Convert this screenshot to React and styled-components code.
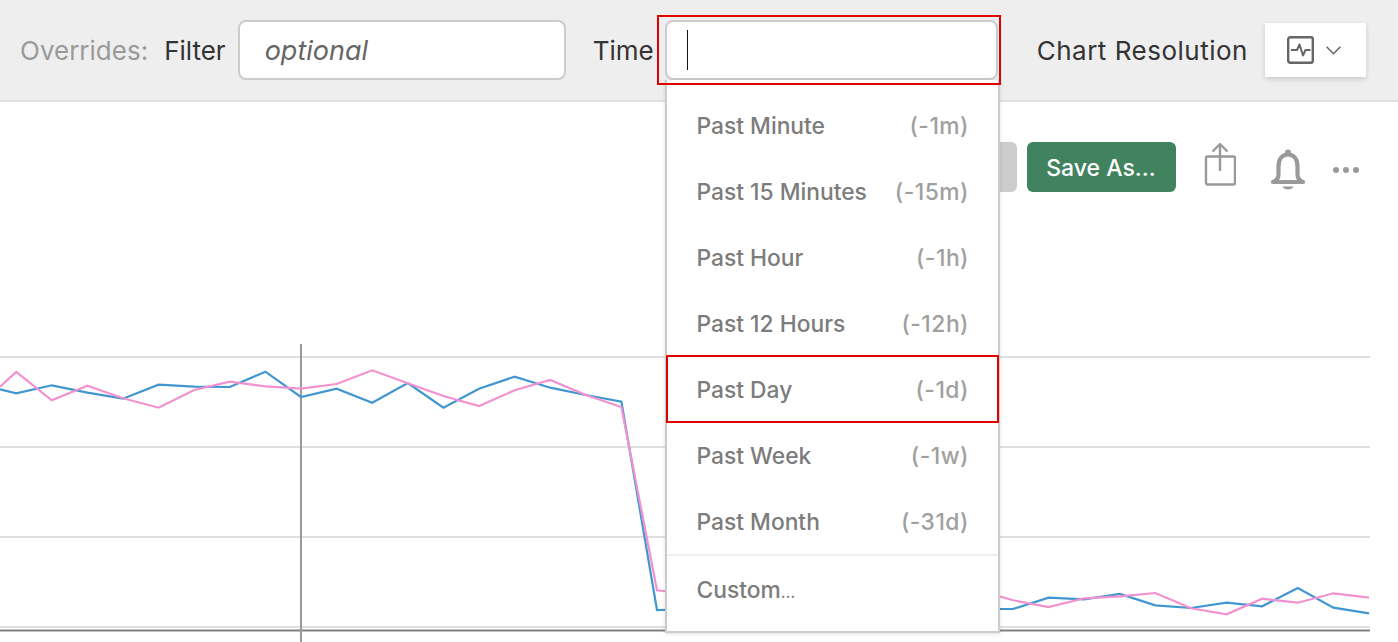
import React from "react";
import styled, { createGlobalStyle } from "styled-components";

const GlobalStyle = createGlobalStyle`
  html, body {
    margin: 0;
    padding: 0;
    background: #fff;
    overflow: hidden;
  }
  body {
    font-family: Inter, "Liberation Sans", sans-serif;
  }
`;

const Page = styled.div`
  position: relative;
  width: 1398px;
  height: 642px;
  overflow: hidden;
`;

const Toolbar = styled.div`
  height: 100px;
  border-bottom: 2px solid #e0e0e0;
  background: #eeeeee;
  display: flex;
  align-items: center;
  padding-left: 20px;
  box-sizing: content-box;
`;

const Label = styled.span`
  font-size: 26px;
  color: ${(p) => (p.$muted ? "#9a9a9a" : "#333333")};
  margin-left: ${(p) => p.$left || 0}px;
  margin-right: ${(p) => p.$right || 0}px;
  letter-spacing: ${(p) => p.$spacing || 0}px;
  white-space: nowrap;
`;

const Field = styled.div`
  box-sizing: border-box;
  width: ${(p) => p.$width}px;
  height: 60px;
  background: #fff;
  border: 2px solid #cccccc;
  border-radius: 8px;
  display: flex;
  align-items: center;
  padding-left: 25px;
  font-size: 27px;
  font-style: italic;
  color: #666666;
`;

const Caret = styled.span`
  width: 1px;
  height: 40px;
  margin-left: -5px;
  background: #111;
`;

const ResolutionButton = styled.div`
  box-sizing: border-box;
  width: 101px;
  height: 54px;
  margin-left: 17px;
  background: #fff;
  box-shadow: 0 2px 5px rgba(0, 0, 0, 0.16);
  display: flex;
  align-items: center;
  padding-left: 22px;
  gap: 12px;
`;

const Content = styled.div`
  position: relative;
  height: 540px;
`;

const Actions = styled.div`
  position: absolute;
  top: 40px;
  right: 0;
  left: 0;
  display: flex;
  align-items: flex-start;
  height: 52px;
`;

const ActionButton = styled.div`
  height: 50px;
  border-radius: 6px;
  background: ${(p) => p.$bg};
  color: #fff;
  font-size: 23px;
  font-weight: 500;
  padding: 2px 1px 0 0;
  display: flex;
  align-items: center;
  justify-content: center;
  box-sizing: border-box;
  width: ${(p) => p.$width}px;
  margin-left: ${(p) => p.$left}px;
`;

const ActionIcon = styled.svg`
  display: block;
  flex: none;
  margin-left: ${(p) => p.$left}px;
  margin-top: ${(p) => p.$top || 0}px;
`;

const Chart = styled.svg`
  position: absolute;
  left: 0;
  top: 0;
  display: block;
`;

const Dropdown = styled.div`
  position: absolute;
  left: 665px;
  top: 80px;
  width: 335px;
  height: 553px;
  box-sizing: border-box;
  background: #fff;
  border: 2px solid #cccccc;
  border-top: none;
  box-shadow: 0 1px 4px rgba(0, 0, 0, 0.12);
  padding-top: 13px;
`;

const Option = styled.div`
  box-sizing: border-box;
  height: 66px;
  display: flex;
  align-items: center;
  justify-content: space-between;
  padding: 0 29px 2px 29.5px;
  font-size: 22.8px;
  font-weight: 500;
  color: #7c7c7c;
  white-space: nowrap;
`;

const Shortcut = styled.span`
  color: #a0a0a0;
  letter-spacing: 0.5px;
`;

const Dots = styled.span`
  font-size: 16px;
`;

const Divider = styled.div`
  height: 2px;
  margin: -1px 0 1px;
  background: #eeeeee;
`;

const Highlight = styled.div`
  position: absolute;
  box-sizing: border-box;
  border: 2px solid #e00000;
  left: ${(p) => p.$x}px;
  top: ${(p) => p.$y}px;
  width: ${(p) => p.$w}px;
  height: ${(p) => p.$h}px;
  pointer-events: none;
`;

const options = [
  ["Past Minute", "(-1m)"],
  ["Past 15 Minutes", "(-15m)"],
  ["Past Hour", "(-1h)"],
  ["Past 12 Hours", "(-12h)"],
  ["Past Day", "(-1d)"],
  ["Past Week", "(-1w)"],
  ["Past Month", "(-31d)"],
];

const blue = [393.3, 385.3, 392.7, 398.7, 384.7, 386.7, 387, 371.7, 397, 388.7, 402.7, 383, 407.7, 388.7, 376.7, 387.7, 395, 401.7, 610, 609, 609, 609, 609, 609, 609, 609, 609, 609, 609, 597.7, 599.3, 594, 605.3, 608, 602.7, 606.3, 588, 607.7, 613.3];
const pink = [372, 400.3, 385.7, 398.3, 407.7, 390, 381.7, 386.3, 388.7, 384, 370.3, 383.3, 396, 406, 390.3, 380, 395, 407, 590.3, 594, 594, 594, 594, 594, 594, 594, 594, 590, 600.3, 607, 598.3, 596.3, 593, 608.3, 614.3, 598.7, 602.7, 593.3, 597.7];

const toPoints = (start, ys) =>
  [start, ...ys.map((y, i) => `${(16.2 + 35.6 * i).toFixed(1)},${y - 102}`)].join(" ");

const App = () => {
  return (
    <Page>
      <GlobalStyle />
      <Toolbar>
        <Label $muted>Overrides:</Label>
        <Label $left={16} $right={12}>Filter</Label>
        <Field $width={328}>optional</Field>
        <Label $left={27} $right={11}>Time</Label>
        <Field $width={333}><Caret /></Field>
        <Label $left={39} $spacing={0.5}>Chart Resolution</Label>
        <ResolutionButton>
          <svg width="27" height="28" viewBox="0 0 27 28" fill="none" stroke="#666" strokeWidth="2.4" strokeLinejoin="round">
            <rect x="1.2" y="1.2" width="24.6" height="25.6" rx="2" />
            <path d="M4 14h6l2.5-5.5 3.5 11 2.5-5.5h5" strokeWidth="2" />
          </svg>
          <svg width="15" height="9" viewBox="0 0 15 9" fill="none" stroke="#666" strokeWidth="1.6">
            <path d="M.6.8l6.9 6.9L14.4.8" />
          </svg>
        </ResolutionButton>
      </Toolbar>
      <Content>
        <Chart width="1398" height="540" viewBox="0 0 1398 540">
          <g stroke="#e0e0e0" strokeWidth="2">
            <line x1="0" x2="1370" y1="255" y2="255" />
            <line x1="0" x2="1370" y1="345" y2="345" />
            <line x1="0" x2="1370" y1="435" y2="435" />
            <line x1="0" x2="1370" y1="525" y2="525" />
          </g>
          <line x1="0" x2="1370" y1="528.5" y2="528.5" stroke="#808080" strokeWidth="2" />
          <line x1="301" x2="301" y1="242" y2="540" stroke="#999999" strokeWidth="2" />
          <polyline points={toPoints("0,287.3", blue)} fill="none" stroke="#4097cf" strokeWidth="2.2" />
          <polyline points={toPoints("0,284.7", pink)} fill="none" stroke="#f191cf" strokeWidth="2.2" />
        </Chart>
        <Actions>
          <ActionButton $bg="#cccccc" $width={60} $left={957} />
          <ActionButton $bg="#41835f" $width={149} $left={10}>Save As…</ActionButton>
          <ActionIcon $left={28} width="32" height="44" viewBox="0 0 32 44" fill="none" stroke="#999" strokeWidth="2.4" strokeLinejoin="round">
            <rect x="2" y="14.5" width="29" height="28" rx="1.5" />
            <path d="M16 1.5V29M8.5 9.5 16 2l7.5 7.5" />
          </ActionIcon>
          <ActionIcon $left={34} $top={7} width="36" height="42" viewBox="0 0 36 42" fill="#fff" stroke="#999" strokeWidth="4.2" strokeLinejoin="round">
            <path d="M3 33c3-1 5.5-3 5.5-8v-7C8.5 10 12 5.5 18 5.5S27.5 10 27.5 18v7c0 5 2.5 7 5.5 8z" />
            <circle cx="18" cy="3.5" r="3" fill="#999" stroke="none" />
            <path d="M12.5 37.5h11c-1 3.8-10 3.8-11 0z" fill="#999" stroke="none" />
          </ActionIcon>
          <ActionIcon $left={27} $top={24} width="26" height="8" viewBox="0 0 26 8" fill="#999">
            <circle cx="3" cy="4" r="3" />
            <circle cx="13" cy="4" r="3" />
            <circle cx="23" cy="4" r="3" />
          </ActionIcon>
        </Actions>
      </Content>
      <Dropdown>
        {options.map(([label, shortcut]) => (
          <Option key={label}>
            {label}
            <Shortcut>{shortcut}</Shortcut>
          </Option>
        ))}
        <Divider />
        <Option><span>Custom<Dots>…</Dots></span></Option>
      </Dropdown>
      <Highlight $x={657} $y={15} $w={344} $h={70} />
      <Highlight $x={666} $y={355} $w={333} $h={68} />
    </Page>
  );
};

export default App;
